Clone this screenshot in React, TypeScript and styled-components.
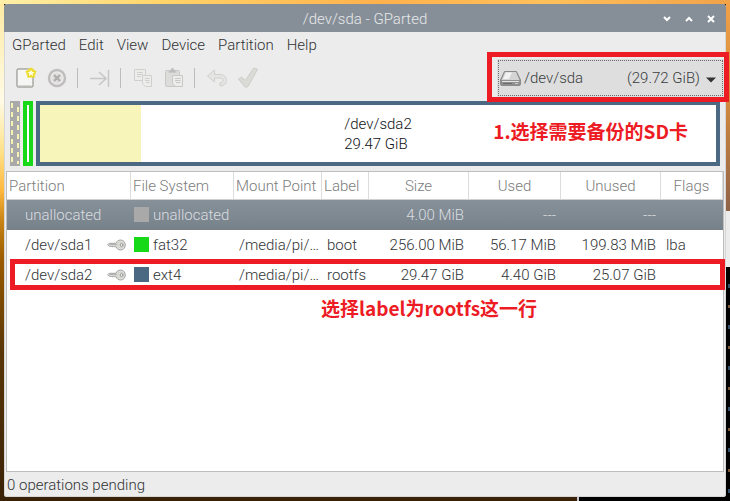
import React, { useState } from "react";
import styled, { createGlobalStyle, css } from "styled-components";

const GlobalStyle = createGlobalStyle`
  * { box-sizing: border-box; }
  body { margin: 0; }
  button, select {
    font: inherit;
    color: inherit;
    border: 0;
    margin: 0;
    padding: 0;
    background: none;
  }
`;

const slate = "#868f98";
const red = "#ed1c24";

const Desktop = styled.div`
  position: relative;
  display: flex;
  min-height: 100vh;
  padding: 4px;
  overflow: hidden;
  font: 300 15px/20px Roboto, "Noto Sans CJK SC", sans-serif;
  color: #303335;
  background:
    linear-gradient(90deg, #fff0a8, #ffd469 22%, #ffb14c 52%, #ffc05a 75%, #f2a248) top / 100% 4px no-repeat,
    linear-gradient(#ffe9a0, #fffbe6 20%, #ffe28a 30%, #ffb93f 38%, #c98414 44%, #9a5a00 52%, #5a3608 70%, #3a2208) left / 4px 100% no-repeat,
    linear-gradient(#f2a248, #d38a3c 20%, #8f6248 42%) right / 4px 100% no-repeat,
    #3a2208;
`;

const Terminal = styled.div`
  position: absolute;
  left: 577px;
  right: 0;
  top: 211px;
  bottom: 0;
  border-left: 2px solid #c9c9c9;
  border-top: 56px solid #ececec;
  background:
    repeating-linear-gradient(#000 0 17px, #35506a 17px 21px, #000 21px 38px, #7a5a3a 38px 41px) right / 2px 100% no-repeat,
    #000;
`;

const Window = styled.main`
  position: relative;
  flex: 1;
  min-width: 0;
  display: flex;
  flex-direction: column;
  border-radius: 4px 4px 3px 3px;
  background: #ececec;
  box-shadow: inset 0 0 0 1px #d6d6d6;
`;

const TitleBar = styled.header`
  display: flex;
  align-items: center;
  height: 28px;
  padding: 0 4px;
  border-radius: 4px 4px 0 0;
  background: ${slate};
  color: #e6e8ea;
`;

const Title = styled.h1`
  flex: 1;
  margin: 0;
  padding-left: 66px;
  padding-top: 2px;
  font: inherit;
  text-align: center;
`;

const WindowButton = styled.button`
  display: flex;
  justify-content: center;
  width: 22px;
  padding-top: 2px;
`;

const MenuBar = styled.nav`
  display: flex;
  height: 26px;
  padding: 0 1px 1px;
`;

const MenuButton = styled.button`
  padding: 0 6px 0 7px;
`;

const ToolBar = styled.div`
  display: flex;
  align-items: center;
  height: 40px;
  margin-bottom: 3px;
  padding: 0 2px 0 6px;
`;

const ToolButton = styled.button`
  display: flex;
  justify-content: center;
  width: 31px;
`;

const Separator = styled.span`
  width: 1px;
  height: 20px;
  margin: 0 6px 0 5px;
  background: #bdbdbd;
`;

const DeviceBox = styled.div`
  position: relative;
  width: 227px;
  height: 38px;
  margin-left: auto;
`;

const DeviceSelect = styled.select`
  appearance: none;
  width: 100%;
  height: 100%;
  padding-left: 27px;
  outline: 1px dotted #6c6c6c;
  outline-offset: -2px;
  background: #dedede;
  color: #3a3d40;
`;

const DriveIcon = styled.svg`
  position: absolute;
  left: 3px;
  top: 12px;
  pointer-events: none;
`;

const Caret = styled.svg`
  position: absolute;
  right: 8px;
  top: 18px;
  pointer-events: none;
`;

const Outline = styled.span<{ $kind: "device" | "row" }>`
  position: absolute;
  z-index: 2;
  border: 5px solid ${red};
  pointer-events: none;
  ${(p) =>
    p.$kind === "device"
      ? css`inset: -7px -5px -5px -10px;`
      : css`inset: -1px -2px 0 3px;`}
`;

const Note = styled.strong<{ $kind: "device" | "row" }>`
  position: absolute;
  z-index: 2;
  color: ${red};
  font: 700 19px/24px "Noto Sans CJK SC", sans-serif;
  white-space: nowrap;
  ${(p) =>
    p.$kind === "device"
      ? css`right: 28px; top: 14px;`
      : css`left: 314px; top: 36px;`}
`;

const DiskMap = styled.section`
  display: flex;
  gap: 3px;
  height: 65px;
  margin: 0 6px 5px;
`;

const Unallocated = styled.div`
  width: 10px;
  background:
    repeating-linear-gradient(#f5f3b4 0 5px, transparent 5px 9px) 1px 2px / 2px 61px no-repeat,
    repeating-linear-gradient(transparent 0 4px, #f5f3b4 4px 9px) 7px 2px / 2px 61px no-repeat,
    #a9a9a9;
`;

const Segment = styled.div<{ $color: string; $grow?: boolean }>`
  position: relative;
  display: flex;
  align-items: center;
  justify-content: center;
  width: 10px;
  border: 4px solid ${(p) => p.$color};
  background: #fff;
  ${(p) =>
    p.$grow &&
    css`
      flex: 1;
      background: linear-gradient(90deg, #f7f5b9 15%, #fff 15%);
      color: #101214;
    `}
`;

const SegmentLabel = styled.p`
  margin: 1px 0 0;
`;

const ListPane = styled.section`
  flex: 1;
  margin: 0 2px;
  border: 1px solid #bdbdbd;
  background: #fff;
`;

const Table = styled.table`
  width: 100%;
  table-layout: fixed;
  border-collapse: separate;
  border-spacing: 0;
`;

const Column = styled.col<{ $width?: number }>`
  width: ${(p) => (p.$width ? `${p.$width}px` : "auto")};
`;

const HeadCell = styled.th<{ $center?: boolean }>`
  height: 28px;
  padding: ${(p) => (p.$center ? "0" : "0 0 0 2px")};
  border-right: 1px solid #dcdcdc;
  border-bottom: 1px solid #cfcfcf;
  font-weight: 300;
  text-align: ${(p) => (p.$center ? "center" : "left")};
  white-space: nowrap;
  color: #7c7c7c;
`;

const Row = styled.tr<{ $selected?: boolean }>`
  position: relative;
  ${(p) =>
    p.$selected &&
    css`
      background: linear-gradient(#87919a, #77818a);
      color: #d9dde0;
    `}
`;

const Cell = styled.td<{ $right?: boolean }>`
  height: 30px;
  padding: 0 5px 1px;
  text-align: ${(p) => (p.$right ? "right" : "left")};
  white-space: nowrap;
`;

const NameLine = styled.div`
  display: flex;
  align-items: center;
  justify-content: space-between;
  padding-left: 13px;
`;

const FsLine = styled.div`
  display: flex;
  align-items: center;
  gap: 4px;
  margin-left: -2px;
`;

const Swatch = styled.span<{ $color: string }>`
  flex: none;
  width: 15px;
  height: 15px;
  background: ${(p) => p.$color};
`;

const StatusBar = styled.footer`
  height: 25px;
  padding: 3px;
`;

const KeyIcon = () => (
  <svg width="19" height="12" viewBox="0 0 19 12" aria-label="Mounted">
    <path
      d="M9 4.3H2.2L.7 5.8 2.2 7.2h1.2l.8.8.8-.8 1 .9.9-.9.9.6H9.2C9.8 9.900 11.500 11 13.500 11c2.700 0 4.800-2.100 4.800-5S16.200 1 13.500 1C11.300 1 9.600 2.300 9 4.300Z"
      fill="#e2e2df"
      stroke="#a2a2a0"
    />
    <path d="M2.500 5.700H10" stroke="#a8a8a6" />
    <circle cx="13.500" cy="6" r="3" fill="none" stroke="#cdcdca" />
    <circle cx="14.500" cy="6" r="1.400" fill="#fff" stroke="#8c8c8a" />
  </svg>
);

const NewIcon = () => (
  <svg width="22" height="22" viewBox="0 0 22 22">
    <rect x="2" y="2" width="16" height="18" rx="1" fill="#f6f6f4" stroke="#83837f" />
    <path d="M3.500 18.500H16.500" stroke="#d4d4d0" />
    <circle cx="16" cy="6" r="4.900" fill="#f3e34a" opacity=".85" />
    <path d="m16 1.200 1.500 3 3.300.4-2.400 2.300.6 3.300-3-1.600-3 1.600.6-3.300-2.400-2.300 3.300-.4Z" fill="#fffde0" stroke="#ead91e" strokeWidth="1.200" strokeLinejoin="round" />
  </svg>
);

const DeleteIcon = () => (
  <svg width="22" height="22" viewBox="0 0 22 22" fill="none">
    <circle cx="11" cy="11" r="8" stroke="#c0bdbd" strokeWidth="2.500" />
    <circle cx="11" cy="11" r="5.500" fill="#e2e0e0" />
    <path d="m8 8 6 6m0-6-6 6" stroke="#b0adad" strokeWidth="2.400" />
  </svg>
);

const ResizeIcon = () => (
  <svg width="22" height="22" viewBox="0 0 22 22" fill="none" stroke="#c6c6c6" strokeWidth="1.500">
    <path d="M1 11.500h16M10 5l7 6.500-7 6.500M19.500 3v17" />
  </svg>
);

const CopyIcon = () => (
  <svg width="22" height="22" viewBox="0 0 22 22" fill="#ececeb" stroke="#d0d0ce">
    <path d="M2.500 2.500h11v11h-11z" />
    <path d="M5 5.500h6M5 7.500h6M5 9.500h4" />
    <path d="M10.500 8.500h9v11h-6l-3-3z" />
    <path d="M13 11.500h4.500M13 13.500h4.500M14 15.500h3.500" />
  </svg>
);

const PasteIcon = () => (
  <svg width="22" height="22" viewBox="0 0 22 22" fill="#dcdcda" stroke="#c8c8c6">
    <rect x="2.500" y="3.500" width="14" height="16" rx="1" />
    <path d="M6 5.500h7v-2h-2c0-3-3-3-3 0H6Z" fill="#bbb" />
    <path d="M9.500 8.500h10v11h-7l-3-3z" fill="#ececeb" />
    <path d="M12 11.500h5.500M12 13.500h5.500M13 15.500h4.500" />
  </svg>
);

const UndoIcon = () => (
  <svg width="22" height="22" viewBox="0 0 22 22" fill="#e5e5e3" stroke="#cfcfcd" strokeLinejoin="round">
    <path d="M8.500 3 1.500 9l7 6v-4H14c4 0 4 5 0 5v3c8.500 0 8.500-11.500 0-11.500H8.500Z" />
  </svg>
);

const ApplyIcon = () => (
  <svg width="24" height="24" viewBox="0 0 24 24" fill="#dadad7" stroke="#cdcdca" strokeLinejoin="round">
    <path d="M2.500 13 5.500 11l4 3.500L17.500 2.200Q19 1.500 21.500 3.500L12 20.500Q10 22 8.500 20.500Z" />
  </svg>
);

const menus = ["GParted", "Edit", "View", "Device", "Partition", "Help"];

const columns = [
  { name: "Partition", width: 124 },
  { name: "File System", width: 103 },
  { name: "Mount Point", width: 88 },
  { name: "Label", width: 47 },
  { name: "Size", width: 100, center: true },
  { name: "Used", width: 92, center: true },
  { name: "Unused", width: 100, center: true },
  { name: "Flags", center: true },
];

const partitions = [
  { name: "unallocated", locked: false, color: "#a9a9a9", fs: "unallocated", mount: "", label: "", size: "4.00 MiB", used: "---", unused: "---", flags: "" },
  { name: "/dev/sda1", locked: true, color: "#18d918", fs: "fat32", mount: "/media/pi/…", label: "boot", size: "256.00 MiB", used: "56.17 MiB", unused: "199.83 MiB", flags: "lba" },
  { name: "/dev/sda2", locked: true, color: "#4b6983", fs: "ext4", mount: "/media/pi/…", label: "rootfs", size: "29.47 GiB", used: "4.40 GiB", unused: "25.07 GiB", flags: "" },
];

export default function App() {
  const [selected, setSelected] = useState("unallocated");

  return (
    <>
      <GlobalStyle />
      <Desktop>
        <Terminal />
        <Window>
          <TitleBar>
            <Title>/dev/sda - GParted</Title>
            <WindowButton aria-label="Minimize">
              <svg width="10" height="10" fill="none" stroke="#fff" strokeWidth="2"><path d="m2 3 3 3 3-3" /></svg>
            </WindowButton>
            <WindowButton aria-label="Maximize">
              <svg width="10" height="10" fill="none" stroke="#fff" strokeWidth="2"><path d="m2 7 3-3 3 3" /></svg>
            </WindowButton>
            <WindowButton aria-label="Close">
              <svg width="10" height="10" fill="none" stroke="#fff" strokeWidth="2"><path d="m2 2 6 6m0-6-6 6" /></svg>
            </WindowButton>
          </TitleBar>

          <MenuBar>
            {menus.map((name) => <MenuButton key={name}>{name}</MenuButton>)}
          </MenuBar>

          <ToolBar>
            <ToolButton aria-label="New"><NewIcon /></ToolButton>
            <ToolButton aria-label="Delete"><DeleteIcon /></ToolButton>
            <Separator />
            <ToolButton aria-label="Resize or move"><ResizeIcon /></ToolButton>
            <Separator />
            <ToolButton aria-label="Copy"><CopyIcon /></ToolButton>
            <ToolButton aria-label="Paste"><PasteIcon /></ToolButton>
            <Separator />
            <ToolButton aria-label="Undo"><UndoIcon /></ToolButton>
            <ToolButton aria-label="Apply"><ApplyIcon /></ToolButton>
            <DeviceBox>
              <DeviceSelect aria-label="Device">
                <option>{"/dev/sda" + "\u00a0".repeat(12) + "(29.72 GiB)"}</option>
              </DeviceSelect>
              <DriveIcon width="21" height="15" viewBox="0 0 21 15">
                <path d="M4.500.500h12L20.500 9v4q0 1.500-1.500 1.500H2Q.500 14.500.500 13V9Z" fill="#909090" stroke="#8a8a8a" />
                <path d="M5 1h11l3.500 8h-18Z" fill="#d4d4d4" />
                <path d="M6 1.500h6L9 8H3Z" fill="#f2f2f2" />
                <path d="M2 10.500h17" stroke="#e4e4e4" />
                <path d="M3 12.500h9" stroke="#6a6a6a" />
                <path d="M15 12.500h3" stroke="#ccc" />
              </DriveIcon>
              <Caret width="10" height="6"><path d="M0 .500h10L5 5.500Z" fill="#333" /></Caret>
              <Outline $kind="device" />
            </DeviceBox>
          </ToolBar>

          <DiskMap aria-label="Disk map">
            <Unallocated />
            <Segment $color="#18d918" />
            <Segment $color="#4b6983" $grow>
              <SegmentLabel>/dev/sda2<br />29.47 GiB</SegmentLabel>
              <Note $kind="device">1.选择需要备份的SD卡</Note>
            </Segment>
          </DiskMap>

          <ListPane>
            <Table>
              <colgroup>
                {columns.map((c) => <Column key={c.name} $width={c.width} />)}
              </colgroup>
              <thead>
                <tr>
                  {columns.map((c) => <HeadCell key={c.name} $center={c.center}>{c.name}</HeadCell>)}
                </tr>
              </thead>
              <tbody>
                {partitions.map((p) => (
                  <Row key={p.name} $selected={p.name === selected} onClick={() => setSelected(p.name)}>
                    <Cell>
                      <NameLine>{p.name}{p.locked && <KeyIcon />}</NameLine>
                      {p.label === "rootfs" && (
                        <>
                          <Outline $kind="row" />
                          <Note $kind="row">选择label为rootfs这一行</Note>
                        </>
                      )}
                    </Cell>
                    <Cell><FsLine><Swatch $color={p.color} />{p.fs}</FsLine></Cell>
                    <Cell>{p.mount}</Cell>
                    <Cell>{p.label}</Cell>
                    <Cell $right>{p.size}</Cell>
                    <Cell $right>{p.used}</Cell>
                    <Cell $right>{p.unused}</Cell>
                    <Cell>{p.flags}</Cell>
                  </Row>
                ))}
              </tbody>
            </Table>
          </ListPane>
          <StatusBar>0 operations pending</StatusBar>
        </Window>
      </Desktop>
    </>
  );
}
